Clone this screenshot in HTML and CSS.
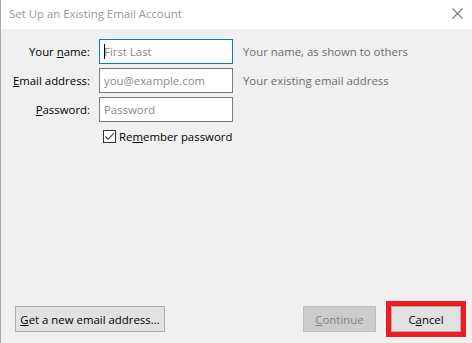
FILE: index.html
```html
<!DOCTYPE html>
<html lang="en">
<head>
    <meta charset="UTF-8">
    <meta name="viewport" content="width=device-width, initial-scale=1.0">
    <title>Set Up an Existing Email Account</title>
    <link rel="stylesheet" href="styles.css">
</head>
<body>
    <div class="window">
        <div class="titlebar">
            <span class="title">Set Up an Existing Email Account</span>
            <svg class="close" width="11" height="11" viewBox="0 0 11 11">
                <path d="M0.5 0.5 L10.5 10.5 M10.5 0.5 L0.5 10.5" stroke="#7a7a7a" stroke-width="1.1" fill="none"/>
            </svg>
        </div>
        <div class="content">
            <form class="account-form">
                <label class="label" for="name">Your <u>n</u>ame:</label>
                <span class="field focused"><input id="name" type="text" placeholder="First Last"></span>
                <span class="hint">Your name, as shown to others</span>

                <label class="label" for="email"><u>E</u>mail address:</label>
                <span class="field"><input id="email" type="text" placeholder="you@example.com"></span>
                <span class="hint">Your existing email address</span>

                <label class="label" for="password"><u>P</u>assword:</label>
                <span class="field"><input id="password" type="password" placeholder="Password"></span>
                <span></span>

                <span></span>
                <label class="remember">
                    <span class="checkbox">
                        <svg width="11" height="11" viewBox="0 0 11 11">
                            <path d="M1.5 5.5 L4.2 8.3 L9.6 2.4" stroke="#333" stroke-width="1.1" fill="none"/>
                        </svg>
                    </span>
                    <span class="remember-text">Re<u>m</u>ember password</span>
                </label>
            </form>

            <div class="footer">
                <button type="button" class="btn new-address"><u>G</u>et a new email address...</button>
                <div class="actions">
                    <button type="button" class="btn continue" disabled><u>C</u>ontinue</button>
                    <button type="button" class="btn cancel">C<u>a</u>ncel</button>
                </div>
            </div>
        </div>
    </div>
</body>
</html>
```

FILE: styles.css
```css
body {
    margin: 0;
    font-family: "Open Sans", "Noto Sans", Arial, sans-serif;
    font-size: 11.4px;
    color: #000;
    background: #f0f0f0;
}
.window {
    width: 472px;
    height: 343px;
    box-sizing: border-box;
    border-left: 1px solid #a8a8a8;
    display: flex;
    flex-direction: column;
}
.titlebar {
    height: 29px;
    background: #fff;
    display: flex;
    align-items: center;
    justify-content: space-between;
    padding: 0 9px 0 8px;
}
.title {
    color: #999;
    font-size: 11.4px;
    margin-top: -2px;
}
.close {
    margin-top: -3px;
}
.content {
    flex: 1;
    display: flex;
    flex-direction: column;
    justify-content: space-between;
    padding: 10px 0 10px 0;
}
.account-form {
    display: grid;
    grid-template-columns: 89px 134px auto;
    column-gap: 9px;
    row-gap: 4px;
    align-items: center;
}
.label {
    text-align: right;
    white-space: nowrap;
}
.field {
    position: relative;
    display: block;
}
.field input {
    display: block;
    width: 100%;
    box-sizing: border-box;
    height: 25px;
    border: 1px solid #7a7a7a;
    background: #fff;
    padding: 0 4px;
    font-family: inherit;
    font-size: 11.4px;
    outline: none;
}
.field input::placeholder {
    color: #8a8a8a;
}
.field.focused input {
    border-color: #0078d7;
}
.field.focused::before {
    content: "";
    position: absolute;
    left: 5px;
    top: 5px;
    width: 1px;
    height: 15px;
    background: #000;
}
.hint {
    color: #6d6d6d;
    margin-left: 1px;
    white-space: nowrap;
}
.remember {
    display: flex;
    align-items: center;
    gap: 3px;
    margin-top: 3px;
    padding-left: 4px;
    white-space: nowrap;
}
.checkbox {
    width: 11px;
    height: 11px;
    border: 1px solid #333;
    background: #fff;
    display: flex;
}
.footer {
    display: flex;
    justify-content: space-between;
    align-items: center;
    padding: 0 0 1px 14px;
}
.actions {
    display: flex;
    gap: 15px;
    padding-right: 11px;
}
.btn {
    height: 26px;
    box-sizing: border-box;
    border: 1px solid #adadad;
    background: #e1e1e1;
    font-family: inherit;
    font-size: 11.4px;
    color: #000;
    padding: 0 8px;
}
.new-address {
    width: 150px;
    padding: 0;
}
.continue {
    width: 73px;
    background: #cccccc;
    border-color: #bfbfbf;
    color: #838383;
}
.cancel {
    width: 70px;
    outline: 5px solid #ed1c24;
}
```
